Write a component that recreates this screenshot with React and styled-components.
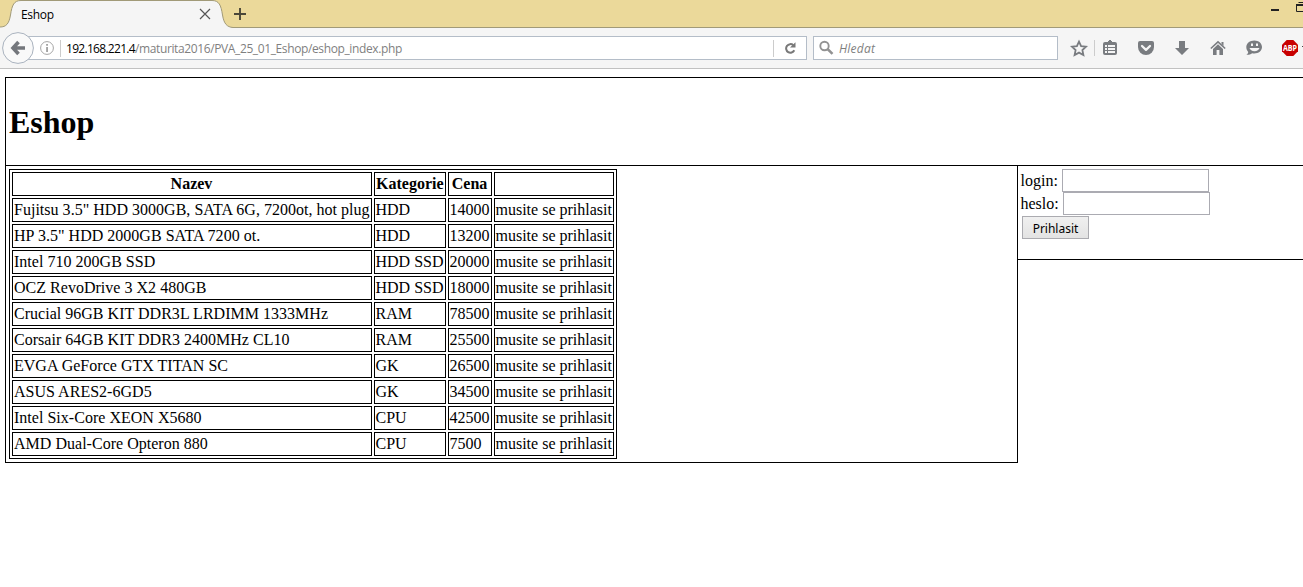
import React from "react";
import styled, { createGlobalStyle } from "styled-components";

const GlobalStyle = createGlobalStyle`
  * { box-sizing: border-box; }
  html, body { margin: 0; padding: 0; background: #fff; overflow: hidden; }
`;

const Window = styled.div`
  width: 1303px;
  height: 587px;
  overflow: hidden;
  background: #fff;
  color: #000;
  font-family: "Liberation Serif", "Times New Roman", serif;
  font-size: 16px;
`;

const uiFont = `font-family: "Open Sans", "Noto Sans", sans-serif; font-size: 12px;`;

const TabStrip = styled.div`
  position: relative;
  display: flex;
  height: 28px;
  background: #ebd99a;
  border-bottom: 1px solid #a19a78;
`;

const TabShape = styled.svg`
  position: absolute;
  left: 0;
  top: 0;
`;

const Tab = styled.div`
  position: relative;
  display: flex;
  align-items: center;
  justify-content: space-between;
  width: 211px;
  height: 28px;
  padding-left: 21px;
  letter-spacing: -0.3px;
  ${uiFont}
`;

const NewTab = styled.svg`
  position: relative;
  margin: 7px 0 0 22px;
`;

const WindowButtons = styled.svg`
  position: relative;
  margin-left: auto;
`;

const NavBar = styled.div`
  display: flex;
  align-items: center;
  height: 41px;
  padding-left: 2px;
  background: #f5f5f5;
  border-bottom: 1px solid #c1c1c1;
`;

const BackButton = styled.svg`
  position: relative;
  flex: none;
  margin-right: -6px;
`;

const Field = styled.div`
  display: flex;
  align-items: center;
  flex: none;
  width: ${(p) => p.$width}px;
  height: 24px;
  margin-right: ${(p) => p.$gap || 0}px;
  background: #fff;
  border: 1px solid #b4bdc8;
  color: #7f7f7f;
  white-space: pre;
  ${uiFont}
`;

const InfoIcon = styled.svg`
  margin-left: 11px;
`;

const Divider = styled.span`
  width: 1px;
  height: 17px;
  background: #ccc;
  margin: ${(p) => p.$margin || "0"};
`;

const Address = styled.span`
  flex: 1;
  letter-spacing: -0.38px;
`;

const Host = styled.span`
  color: #000;
  letter-spacing: -0.7px;
`;

const Reload = styled.svg`
  margin-right: 10px;
`;

const Placeholder = styled.span`
  font-style: italic;
  margin-left: 5px;
  letter-spacing: 0.2px;
`;

const Tools = styled.svg`
  flex: none;
`;

const Page = styled.main`
  margin: 8px 0 0 5px;
`;

const Header = styled.header`
  height: 89px;
  padding: 26px 0 0 3px;
  border: 1px solid #000;
  border-right: 0;
`;

const Title = styled.h1`
  margin: 0;
  font-size: 32px;
  line-height: 37px;
`;

const Body = styled.div`
  display: flex;
  align-items: flex-start;
`;

const Products = styled.section`
  width: 1013px;
  height: 297px;
  padding: 3px;
  border: 1px solid #000;
  border-top: 0;
`;

const Table = styled.table`
  table-layout: fixed;
  width: 608px;
  border: 1px solid #000;
  border-collapse: separate;
  border-spacing: 2px;
`;

const Cell = styled.td`
  height: 24px;
  padding: 1px;
  border: 1px solid #000;
  line-height: 20px;
  white-space: nowrap;

  & + & {
    padding: 1px 2px 1px 0.5px;
  }
`;

const NameCell = styled(Cell)`
  letter-spacing: 0.02px;
`;

const HeadCell = styled.th`
  height: 24px;
  padding: 1px 2px 1px 1px;
  border: 1px solid #000;
  line-height: 20px;
  white-space: nowrap;
`;

const Login = styled.form`
  flex: 1;
  height: 94px;
  padding: 3px 0 0 3px;
  border-bottom: 1px solid #000;
`;

const LoginRow = styled.label`
  display: flex;
  height: 23px;
  line-height: 24px;
`;

const LoginInput = styled.input`
  width: 147px;
  height: 23px;
  margin: 0 0 0 ${(p) => p.$gap}px;
  padding: 1px;
  border: 1px solid #ababb2;
  border-radius: 0;
  background: #fff;
`;

const Caption = styled.span`
  width: 37px;
  text-indent: -0.5px;
  white-space: nowrap;
`;

const Submit = styled.button`
  display: block;
  width: 67px;
  height: 23px;
  margin: 1px 0 0 1px;
  padding: 1px 0 0;
  border: 1px solid #ababb0;
  border-radius: 0;
  background: linear-gradient(#f0f0f0, #e3e3e3);
  color: #000;
  font: 12px/21px "Noto Sans", sans-serif;
`;

const products = [
  ['Fujitsu 3.5" HDD 3000GB, SATA 6G, 7200ot, hot plug', "HDD", "14000"],
  ['HP 3.5" HDD 2000GB SATA 7200 ot.', "HDD", "13200"],
  ["Intel 710 200GB SSD", "HDD SSD", "20000"],
  ["OCZ RevoDrive 3 X2 480GB", "HDD SSD", "18000"],
  ["Crucial 96GB KIT DDR3L LRDIMM 1333MHz", "RAM", "78500"],
  ["Corsair 64GB KIT DDR3 2400MHz CL10", "RAM", "25500"],
  ["EVGA GeForce GTX TITAN SC", "GK", "26500"],
  ["ASUS ARES2-6GD5", "GK", "34500"],
  ["Intel Six-Core XEON X5680", "CPU", "42500"],
  ["AMD Dual-Core Opteron 880", "CPU", "7500"],
];

function Toolbar() {
  return (
    <Tools width="245" height="40" viewBox="1058 28 245 40" fill="#797c80">
      <path
        d="M1079 41.700l2.100 4.400 4.900.6-3.600 3.400 1 4.900-4.400-2.400-4.400 2.400 1-4.900-3.600-3.400 4.900-.6z"
        fill="none"
        stroke="#797c80"
        strokeWidth="1.800"
      />
      <path d="M1094 40h1v16h-1z" fill="#ccc" />
      <path d="M1105 42h3v-1h1v-1h2v1h1v1h3a2 2 0 0 1 2 2v9a2 2 0 0 1-2 2h-10a2 2 0 0 1-2-2v-9a2 2 0 0 1 2-2z" />
      <path d="M1105 45h2v2h-2zM1108 45h7v2h-7zM1105 48h2v2h-2zM1108 48h7v2h-7zM1105 51h2v2h-2zM1108 51h7v2h-7z" fill="#f5f5f5" />
      <path d="M1140 41h12a2 2 0 0 1 2 2v4a8 8 0 0 1-16 0v-4a2 2 0 0 1 2-2z" />
      <path d="M1142 46l4 3.800 4-3.800" fill="none" stroke="#f5f5f5" strokeWidth="2.300" strokeLinecap="round" strokeLinejoin="round" />
      <path d="M1179 41h6v7h4l-7 7-7-7h4z" />
      <path d="M1210.800 48.500l7.200-6.700 7.200 6.700" fill="none" stroke="#797c80" strokeWidth="1.600" />
      <path d="M1218 44.300l5 4.700v6h-3.600v-5h-2.800v5h-3.600v-6zM1221.500 42h2v4l-2-2z" />
      <path d="M1254.300 40.500c4.300 0 7.700 2.800 7.700 6.500s-3.400 6.500-7.700 6.500c-.8 0-1.500-.1-2.200-.3-1.500 1.200-3.300 1.700-5.800 1.600 1.300-.9 1.900-1.700 1.900-2.900-1.200-1.300-1.900-3-1.900-4.900 0-3.700 3.700-6.500 8-6.500z" />
      <path d="M1251 43.500h2v2.500h-2zM1256 43.500h2v2.500h-2zM1249.500 48h10c-.6 2-2.400 3.200-5 3.200s-4.400-1.200-5-3.200z" fill="#f5f5f5" />
      <path d="M1286.700 40h6.600l4.700 4.700v6.600l-4.700 4.700h-6.600l-4.700-4.700v-6.600z" fill="#c80000" />
      <text x="1283" y="51" textLength="14" lengthAdjust="spacingAndGlyphs" fontFamily="Open Sans, sans-serif" fontSize="8" fontWeight="700" fill="#fff">ABP</text>
      <path d="M1302 46h1v1h-1z" fill="#444" />
    </Tools>
  );
}

export default function App() {
  return (
    <Window>
      <GlobalStyle />
      <TabStrip>
        <TabShape width="240" height="28" viewBox="0 0 240 28">
          <path d="M0 28V27C6 27 9 24 10.500 15C12 5 14 .5 21 .5H212C219 .5 221 5 222.500 15C224 24 227 27 233 27.500V28Z" fill="#f5f5f5" />
          <path d="M0 27C6 27 9 24 10.500 15C12 5 14 .5 21 .5H212C219 .5 221 5 222.500 15C224 24 227 27 233 27.500" fill="none" stroke="#a19a78" />
        </TabShape>
        <Tab>
          Eshop
          <svg width="12" height="12" viewBox="0 0 12 12">
            <path d="M1 1l10 10M11 1L1 11" stroke="#555" strokeWidth="1.200" />
          </svg>
        </Tab>
        <NewTab width="14" height="14" viewBox="0 0 14 14">
          <path d="M1 7h12M7 1v12" stroke="#4a4738" strokeWidth="1.900" />
        </NewTab>
        <WindowButtons width="40" height="28" viewBox="1263 0 40 28">
          <path d="M1271 9h8v2h-8z" fill="#222" />
          <path d="M1303 4.500h-6.500v7h6.500M1303 2.500h-4.500" fill="none" stroke="#222" />
          <path d="M1296 4h7v2h-7z" fill="#222" />
        </WindowButtons>
      </TabStrip>
      <NavBar>
        <BackButton width="32" height="32" viewBox="0 0 32 32">
          <circle cx="16" cy="16" r="15.400" fill="#f9f9f9" stroke="#a9b2be" />
          <path d="M16.500 10l-5.500 6 5.500 6M11.500 16H23" fill="none" stroke="#74777c" strokeWidth="3.600" />
        </BackButton>
        <Field $width={779} $gap={6}>
          <InfoIcon width="14" height="14" viewBox="0 0 14 14">
            <circle cx="7" cy="7" r="6.400" fill="none" stroke="#a5a5a5" />
            <path d="M6.200 3h1.700v1.700H6.200zM6.200 6h1.700v5H6.200z" fill="#999" />
          </InfoIcon>
          <Divider $margin="0 5px 0 6px" />
          <Address>
            <Host>192.168.221.4</Host>/maturita2016/PVA_25_01_Eshop/eshop_index.php
          </Address>
          <Divider $margin="0 10px 0 0" />
          <Reload width="12" height="12" viewBox="0 0 12 12">
            <path d="M9.300 3.200A4.300 4.300 0 1 0 10.300 8.300" fill="none" stroke="#797979" strokeWidth="2" />
            <path d="M11.500 .3v5.200H6z" fill="#797979" />
          </Reload>
        </Field>
        <Field $width={245}>
          <svg width="20" height="16" viewBox="0 0 20 16">
            <circle cx="10.500" cy="6" r="4.200" fill="none" stroke="#929292" strokeWidth="1.900" />
            <path d="M13.500 9l5 4.800" stroke="#929292" strokeWidth="2.500" />
          </svg>
          <Placeholder>Hledat</Placeholder>
        </Field>
        <Toolbar />
      </NavBar>
      <Page>
        <Header>
          <Title>Eshop</Title>
        </Header>
        <Body>
          <Products>
            <Table>
              <colgroup>
                <col style={{ width: 360 }} />
                <col style={{ width: 72 }} />
                <col style={{ width: 44 }} />
                <col style={{ width: 120 }} />
              </colgroup>
              <tbody>
                <tr>
                  <HeadCell>Nazev</HeadCell>
                  <HeadCell>Kategorie</HeadCell>
                  <HeadCell>Cena</HeadCell>
                  <HeadCell />
                </tr>
                {products.map(([name, category, price]) => (
                  <tr key={name}>
                    <NameCell>{name}</NameCell>
                    <Cell>{category}</Cell>
                    <Cell>{price}</Cell>
                    <Cell>musite se prihlasit</Cell>
                  </tr>
                ))}
              </tbody>
            </Table>
          </Products>
          <Login>
            <LoginRow>
              <Caption>login:</Caption>
              <LoginInput $gap={4} />
            </LoginRow>
            <LoginRow>
              <Caption>heslo:</Caption>
              <LoginInput type="password" $gap={5} />
            </LoginRow>
            <Submit type="button">Prihlasit</Submit>
          </Login>
        </Body>
      </Page>
    </Window>
  );
}
